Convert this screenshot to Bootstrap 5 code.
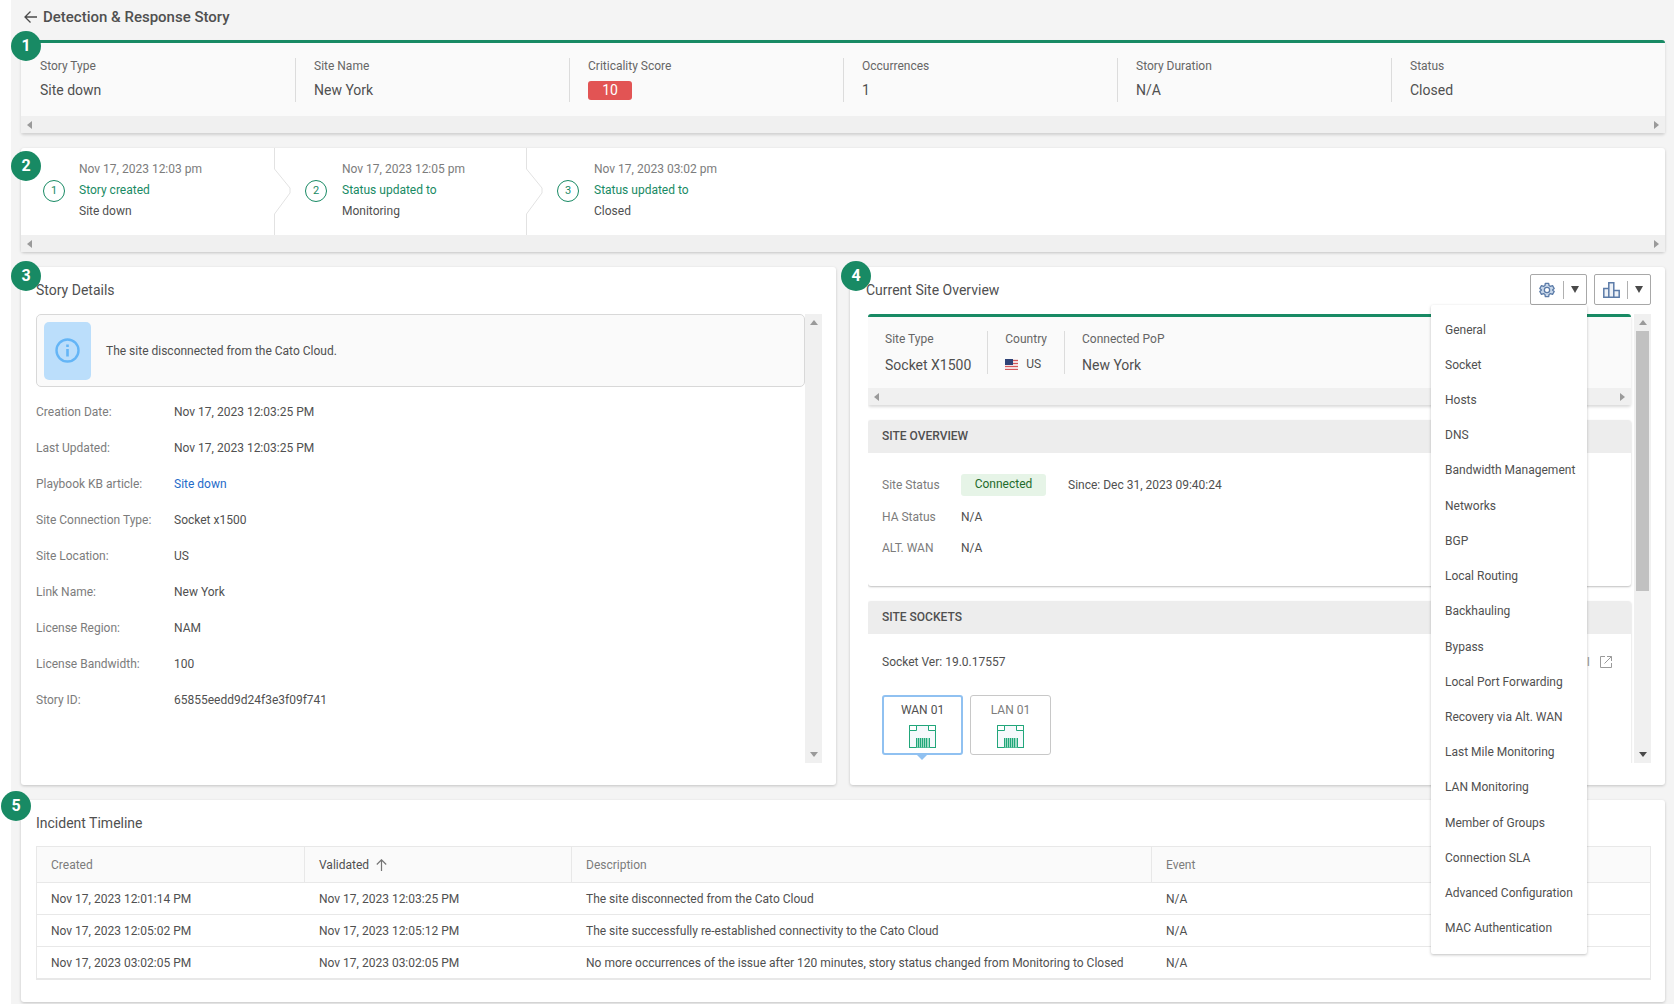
<!DOCTYPE html>
<html lang="en">
<head>
<meta charset="utf-8">
<meta name="viewport" content="width=device-width, initial-scale=1">
<title>Detection &amp; Response Story</title>
<link href="https://cdn.jsdelivr.net/npm/bootstrap@5.3.0/dist/css/bootstrap.min.css" rel="stylesheet">
<style>
  :root { --brand: #188a64; --ink: #505050; --muted-ink: #7c7c7c; --line: #dcdcdc; --grid-line: #e8e8e8; }
  body { font-family: Roboto, "Liberation Sans", sans-serif; font-size: 12px; line-height: 20px; color: var(--ink); background: #fff; }
  .page-shell { margin-left: 11px; padding: 0 9px 2px 10px; background: #f4f4f4; }
  .page-head { height: 40px; padding: 0 3px 6px; }
  .page-head h1 { font-size: 15px; line-height: 20px; font-weight: 500; }
  .back-link { color: var(--ink); line-height: 0; width: 19px; }
  .stack { display: flex; flex-direction: column; gap: 15px; }
  .panel { background: #fff; border-radius: 3px; box-shadow: 0 1px 3px rgba(0,0,0,.2); position: relative; }
  .panel-title { font-size: 14px; line-height: 20px; font-weight: 400; margin: 0; }
  .accent-top { border-top: 3px solid var(--brand); border-radius: 3px; background: #fafafa; box-shadow: 0 2px 3px rgba(0,0,0,.15); }
  .step-pin { position: absolute; left: -10px; width: 30px; height: 30px; line-height: 30px; border-radius: 50%; background: var(--brand); color: #fff; font-size: 16px; font-weight: 700; text-align: center; z-index: 3; }
  .pin-a { top: -12px; } .pin-b { top: 3px; } .pin-c { top: -6px; } .pin-d { top: -6px; left: -9px; } .pin-e { top: -9px; left: -20px; }

  .fact-list { padding: 15px 0 14px; margin: 0; }
  .fact { height: 44px; padding-left: 18px; border-left: 1px solid var(--line); }
  .fact:first-child { border-left-color: transparent; }
  .fact dt { font-weight: 400; line-height: 16px; color: #666; }
  .fact dd { font-size: 14px; line-height: 20px; margin: 6px 0 0; }
  .score-pill { display: inline-block; background: #e25454; color: #fff; border-radius: 3px; width: 44px; height: 19px; line-height: 19px; text-align: center; }

  .rail-x { height: 17px; padding: 0 6px; background: #f0f0f0; display: flex; justify-content: space-between; align-items: center; }
  .rail-y { width: 17px; padding: 6px 0; background: #f0f0f0; flex: none; display: flex; flex-direction: column; justify-content: space-between; align-items: center; }
  .thumb { width: 13px; height: 260px; background: #c1c1c1; margin: 6px 0 auto; }
  .tri { width: 0; height: 0; border: 4px solid transparent; }
  .tri-l { border-left: 0; border-right: 5px solid #9a9a9a; }
  .tri-r { border-right: 0; border-left: 5px solid #9a9a9a; }
  .tri-u { border-top: 0; border-bottom: 5px solid #9a9a9a; }
  .tri-d { border-bottom: 0; border-top: 5px solid #9a9a9a; }
  .tri-dark { border-top-color: #4a4a4a; }

  .step { height: 87px; width: 252px; padding: 11px 0 0 31px; gap: 15px; line-height: 21px; }
  .step:first-child { width: 253px; padding-left: 22px; gap: 14px; }
  .step-no { width: 22px; height: 22px; line-height: 20px; margin-top: 21px; border: 1px solid var(--brand); border-radius: 50%; color: var(--brand); text-align: center; font-size: 11px; }
  .step-date { color: var(--muted-ink); }
  .step-act { color: var(--brand); }
  .chev { width: 17px; height: 87px; margin-right: -17px; flex: none; }

  .duo { display: grid; grid-template-columns: 1fr 1fr; gap: 14px; }
  .pane { height: 518px; padding: 13px 14px 22px 15px; }
  .pane-r { padding-left: 18px; }
  .pane-r .panel-title { margin-left: -2px; }
  .scroll-zone { height: 449px; margin-top: 14px; display: flex; }
  .scroll-body { flex: 1; min-width: 0; overflow: hidden; }
  .note-box { border: 1px solid #d8d8d8; border-radius: 5px; background: #fafafa; padding: 7px; gap: 15px; height: 73px; display: flex; align-items: center; }
  .note-ico { width: 47px; height: 58px; background: #bbdefb; border-radius: 5px; display: flex; align-items: center; justify-content: center; }
  .detail-list { padding-top: 7px; grid-template-columns: 138px 1fr; display: grid; line-height: 36px; margin: 0; }
  .detail-list dt { font-weight: 400; color: var(--muted-ink); }
  .detail-list dd { margin: 0; }
  .detail-list a { color: #1f6bc9; text-decoration: none; }

  .tools { position: absolute; top: 7px; right: 14px; gap: 7px; }
  .tool-btn { height: 31px; width: 57px; border: 1px solid #a8a8a8; border-radius: 2px; background: #fff; padding: 0; display: flex; align-items: center; }
  .tool-btn .pic { width: 33px; border-right: 1px solid #b0b0b0; height: 18px; display: flex; align-items: center; justify-content: center; }
  .tool-btn .drop { flex: 1; display: flex; justify-content: center; }
  .tool-btn .drop::after { content: ""; border: 4px solid transparent; border-top: 7px solid #4a4a4a; border-bottom: 0; }
  .site-menu { position: absolute; top: 31px; right: 0; width: 156px; height: 649px; background: #fff; padding: 7px 0 8px; box-shadow: 0 1px 3px rgba(0,0,0,.25); z-index: 5; border-radius: 2px; display: flex; flex-direction: column; }
  .site-menu a { flex: 1; color: var(--ink); text-decoration: none; padding-left: 14px; display: flex; align-items: center; white-space: nowrap; }

  .site-stack { margin-right: 3px; display: flex; flex-direction: column; gap: 15px; }
  .sub-panel { background: #fff; border-radius: 3px; box-shadow: 0 1px 2px rgba(0,0,0,.25); }
  .sub-panel h3 { font-size: 12px; line-height: 33px; font-weight: 500; padding-left: 14px; background: #ededed; border-radius: 3px 3px 0 0; margin: 0; }
  .site-facts { padding: 14px 0; margin: 0; display: flex; }
  .site-facts .fact { height: 43px; padding: 0 17px; }
  .site-facts .fact:first-child { padding: 0 16px; }
  .site-facts dd { margin-top: 8px; white-space: nowrap; }
  .site-facts .flagged { font-size: 12px; display: flex; align-items: center; gap: 8px; margin-top: 7px; }
  .status-grid { display: grid; grid-template-columns: 79px 107px 1fr; grid-template-rows: 33px 31px 31px; align-items: center; padding: 15px 14px; height: 133px; }
  .key-ink { color: var(--muted-ink); }
  .live-pill { background: #e6f4e7; color: #1f6b2c; border-radius: 3px; height: 22px; line-height: 20px; width: 85px; text-align: center; }
  .socket-row { padding: 17px 19px 22px 14px; line-height: 22px; }
  .ui-link { color: #9a9a9a; text-decoration: none; gap: 10px; }
  .ports { padding: 0 14px 24px; gap: 7px; }
  .port-btn { width: 81px; height: 60px; border: 1px solid #c8c8c8; border-radius: 3px; background: #fff; color: var(--muted-ink); padding: 4px 0 0; position: relative; line-height: 20px; display: flex; flex-direction: column; align-items: center; gap: 5px; }
  .port-btn.on { border: 2px solid #90c1f1; color: var(--ink); padding-top: 3px; }
  .port-btn.on::after { content: ""; position: absolute; top: 100%; left: 50%; margin-left: -8px; border: 7px solid transparent; border-top-color: #90c1f1; border-bottom: 0; }

  .log-pane { padding: 13px 14px 22px 15px; }
  .log-table { width: 100%; margin-top: 13px; table-layout: fixed; border: 1px solid var(--grid-line); border-bottom-width: 2px; border-collapse: separate; border-spacing: 0; }
  .log-table th { font-weight: 400; color: var(--muted-ink); height: 35px; background: #fafafa; border-left: 1px solid var(--grid-line); }
  .log-table th:first-child { border-left: 0; }
  .log-table th, .log-table td { padding: 0 14px; white-space: nowrap; }
  .log-table td + td { padding-left: 15px; }
  .log-table td { border-top: 1px solid var(--grid-line); height: 32px; }
  .log-table .sorted { color: var(--ink); }
  .log-table .w-time { width: 267px; }
  .log-table .w-text { width: 580px; }
</style>
</head>
<body>
<svg width="0" height="0" class="position-absolute" aria-hidden="true">
  <symbol id="jack" viewBox="0 0 27 23"><rect x=".5" y=".5" width="26" height="22" fill="#f6f9fc" stroke="#21a67a"/><path d="M.5.5h7v5h-7zM19.500.5h7v5h-7z" fill="#fff" stroke="#21a67a"/><path d="M7 13h14v9.500H7z" fill="#9fdcc5"/><path d="M7.500 13v9.500M9.500 13v9.500M11.500 13v9.500M13.500 13v9.500M15.500 13v9.500M17.500 13v9.500M20.500 13v9.500" stroke="#21a67a"/></symbol>
</svg>
<main class="page-shell">
  <header class="page-head d-flex align-items-center">
    <a class="back-link" href="#" aria-label="Back"><svg width="13" height="12" viewBox="0 0 13 12" fill="none" stroke="#4a4a4a" stroke-width="1.300"><path d="M13 6H1M6.500.5L1 6l5.500 5.500"/></svg></a>
    <h1 class="m-0">Detection &amp; Response Story</h1>
  </header>

  <div class="stack">
  <section class="panel accent-top">
    <span class="step-pin pin-a">1</span>
    <dl class="fact-list row g-0">
      <div class="col fact"><dt>Story Type</dt><dd>Site down</dd></div>
      <div class="col fact"><dt>Site Name</dt><dd>New York</dd></div>
      <div class="col fact"><dt>Criticality Score</dt><dd><span class="score-pill">10</span></dd></div>
      <div class="col fact"><dt>Occurrences</dt><dd>1</dd></div>
      <div class="col fact"><dt>Story Duration</dt><dd>N/A</dd></div>
      <div class="col fact"><dt>Status</dt><dd>Closed</dd></div>
    </dl>
    <div class="rail-x"><i class="tri tri-l"></i><i class="tri tri-r"></i></div>
  </section>

  <section class="panel">
    <span class="step-pin pin-b">2</span>
    <div class="d-flex">
      <div class="step d-flex"><span class="step-no">1</span><div><div class="step-date">Nov 17, 2023 12:03 pm</div><div class="step-act">Story created</div><div>Site down</div></div></div>
      <svg class="chev" viewBox="0 0 17 87" fill="none" stroke="#e2e2e2"><path d="M.5 0V21L16 40V45L.5 66V87"/></svg>
      <div class="step d-flex"><span class="step-no">2</span><div><div class="step-date">Nov 17, 2023 12:05 pm</div><div class="step-act">Status updated to</div><div>Monitoring</div></div></div>
      <svg class="chev" viewBox="0 0 17 87" fill="none" stroke="#e2e2e2"><path d="M.5 0V21L16 40V45L.5 66V87"/></svg>
      <div class="step d-flex"><span class="step-no">3</span><div><div class="step-date">Nov 17, 2023 03:02 pm</div><div class="step-act">Status updated to</div><div>Closed</div></div></div>
    </div>
    <div class="rail-x"><i class="tri tri-l"></i><i class="tri tri-r"></i></div>
  </section>

  <div class="duo">
    <section class="panel pane">
      <span class="step-pin pin-c">3</span>
      <h2 class="panel-title">Story Details</h2>
      <div class="scroll-zone">
        <div class="scroll-body">
          <div class="note-box">
            <span class="note-ico"><svg width="25" height="25" viewBox="0 0 25 25"><circle cx="12.500" cy="12.500" r="11" fill="none" stroke="#64b5f6" stroke-width="2.400"/><path d="M12.500 6.500v2.600M12.500 11v7.500" stroke="#64b5f6" stroke-width="2.600"/></svg></span>
            <span>The site disconnected from the Cato Cloud.</span>
          </div>
          <dl class="detail-list">
            <dt>Creation Date:</dt><dd>Nov 17, 2023 12:03:25 PM</dd>
            <dt>Last Updated:</dt><dd>Nov 17, 2023 12:03:25 PM</dd>
            <dt>Playbook KB article:</dt><dd><a href="#">Site down</a></dd>
            <dt>Site Connection Type:</dt><dd>Socket x1500</dd>
            <dt>Site Location:</dt><dd>US</dd>
            <dt>Link Name:</dt><dd>New York</dd>
            <dt>License Region:</dt><dd>NAM</dd>
            <dt>License Bandwidth:</dt><dd>100</dd>
            <dt>Story ID:</dt><dd>65855eedd9d24f3e3f09f741</dd>
          </dl>
        </div>
        <div class="rail-y"><i class="tri tri-u"></i><i class="tri tri-d"></i></div>
      </div>
    </section>

    <section class="panel pane pane-r">
      <span class="step-pin pin-d">4</span>
      <h2 class="panel-title">Current Site Overview</h2>
      <div class="tools d-flex">
        <div class="position-relative">
          <button type="button" class="tool-btn" aria-label="Site settings" aria-expanded="true"><span class="pic"><svg width="16" height="16" viewBox="0 0 24 24" fill="#c9d8ea" stroke="#5b7ba8" stroke-width="2" stroke-linejoin="round"><path d="M9.500 2h5l.6 3.300 2 1.200 3.200-1.100 2.500 4.300-2.600 2.200v.2l2.600 2.200-2.500 4.300-3.200-1.100-2 1.200-.6 3.300h-5l-.6-3.300-2-1.200-3.200 1.100-2.500-4.300L3.800 12.100v-.2L1.200 9.700l2.500-4.300 3.200 1.100 2-1.200z"/><circle cx="12" cy="12" r="4" fill="#fff"/></svg></span><span class="drop"></span></button>
          <nav class="site-menu" aria-label="Site settings">
            <a href="#">General</a><a href="#">Socket</a><a href="#">Hosts</a><a href="#">DNS</a><a href="#">Bandwidth Management</a><a href="#">Networks</a><a href="#">BGP</a><a href="#">Local Routing</a><a href="#">Backhauling</a><a href="#">Bypass</a><a href="#">Local Port Forwarding</a><a href="#">Recovery via Alt. WAN</a><a href="#">Last Mile Monitoring</a><a href="#">LAN Monitoring</a><a href="#">Member of Groups</a><a href="#">Connection SLA</a><a href="#">Advanced Configuration</a><a href="#">MAC Authentication</a>
          </nav>
        </div>
        <button type="button" class="tool-btn" aria-label="Site analytics"><span class="pic"><svg width="17" height="16" viewBox="0 0 17 16" fill="#eef2f7" stroke="#5b7ba8" stroke-width="1.500"><path d="M.8 6.500h5v8.700h-5zM5.800.8h5v14.400h-5zM10.800 8.500h5.400v6.700h-5.400z"/></svg></span><span class="drop"></span></button>
      </div>
      <div class="scroll-zone">
        <div class="scroll-body">
          <div class="site-stack">
            <div class="accent-top">
              <dl class="site-facts">
                <div class="fact"><dt>Site Type</dt><dd>Socket X1500</dd></div>
                <div class="fact"><dt>Country</dt><dd class="flagged"><svg width="13" height="11" viewBox="0 0 13 11"><path fill="#f3dede" d="M0 0h13v11H0z"/><path stroke="#d4585c" d="M0 1.500h13M0 4.500h13M0 7.500h13M0 10.500h13"/><path fill="#2f4377" d="M0 0h8v6H0z"/></svg>US</dd></div>
                <div class="fact"><dt>Connected PoP</dt><dd>New York</dd></div>
              </dl>
              <div class="rail-x"><i class="tri tri-l"></i><i class="tri tri-r"></i></div>
            </div>
            <div class="sub-panel">
              <h3>SITE OVERVIEW</h3>
              <div class="status-grid">
                <span class="key-ink">Site Status</span><span class="live-pill">Connected</span><span>Since: Dec 31, 2023 09:40:24</span>
                <span class="key-ink">HA Status</span><span>N/A</span><span></span>
                <span class="key-ink">ALT. WAN</span><span>N/A</span><span></span>
              </div>
            </div>
            <div class="sub-panel">
              <h3>SITE SOCKETS</h3>
              <div class="socket-row d-flex justify-content-between">
                <span>Socket Ver: 19.0.17557</span>
                <a class="ui-link d-flex align-items-center" href="#">Socket WebUI<svg width="12" height="12" viewBox="0 0 12 12" fill="none" stroke="#9a9a9a"><path d="M5 .5H.5v11h11V7M7 .5h4.500V5M11.500.5L4.500 7.500"/></svg></a>
              </div>
              <div class="ports d-flex">
                <button type="button" class="port-btn on">WAN 01<svg width="27" height="23"><use href="#jack"/></svg></button>
                <button type="button" class="port-btn">LAN 01<svg width="27" height="23"><use href="#jack"/></svg></button>
              </div>
            </div>
          </div>
        </div>
        <div class="rail-y"><i class="tri tri-u"></i><i class="thumb"></i><i class="tri tri-d tri-dark"></i></div>
      </div>
    </section>
  </div>

  <section class="panel log-pane">
    <span class="step-pin pin-e">5</span>
    <h2 class="panel-title">Incident Timeline</h2>
    <table class="log-table">
      <colgroup><col class="w-time"><col class="w-time"><col class="w-text"><col></colgroup>
      <thead><tr><th scope="col">Created</th><th scope="col" class="sorted" aria-sort="ascending">Validated <svg class="ms-1" width="11" height="12" viewBox="0 0 11 12" fill="none" stroke="#757575" stroke-width="1.200"><path d="M5.500 12V1M.8 5.500L5.500.8l4.700 4.700"/></svg></th><th scope="col">Description</th><th scope="col">Event</th></tr></thead>
      <tbody>
        <tr><td>Nov 17, 2023 12:01:14 PM</td><td>Nov 17, 2023 12:03:25 PM</td><td>The site disconnected from the Cato Cloud</td><td>N/A</td></tr>
        <tr><td>Nov 17, 2023 12:05:02 PM</td><td>Nov 17, 2023 12:05:12 PM</td><td>The site successfully re-established connectivity to the Cato Cloud</td><td>N/A</td></tr>
        <tr><td>Nov 17, 2023 03:02:05 PM</td><td>Nov 17, 2023 03:02:05 PM</td><td>No more occurrences of the issue after 120 minutes, story status changed from Monitoring to Closed</td><td>N/A</td></tr>
      </tbody>
    </table>
  </section>
  </div>
</main>
</body>
</html>
